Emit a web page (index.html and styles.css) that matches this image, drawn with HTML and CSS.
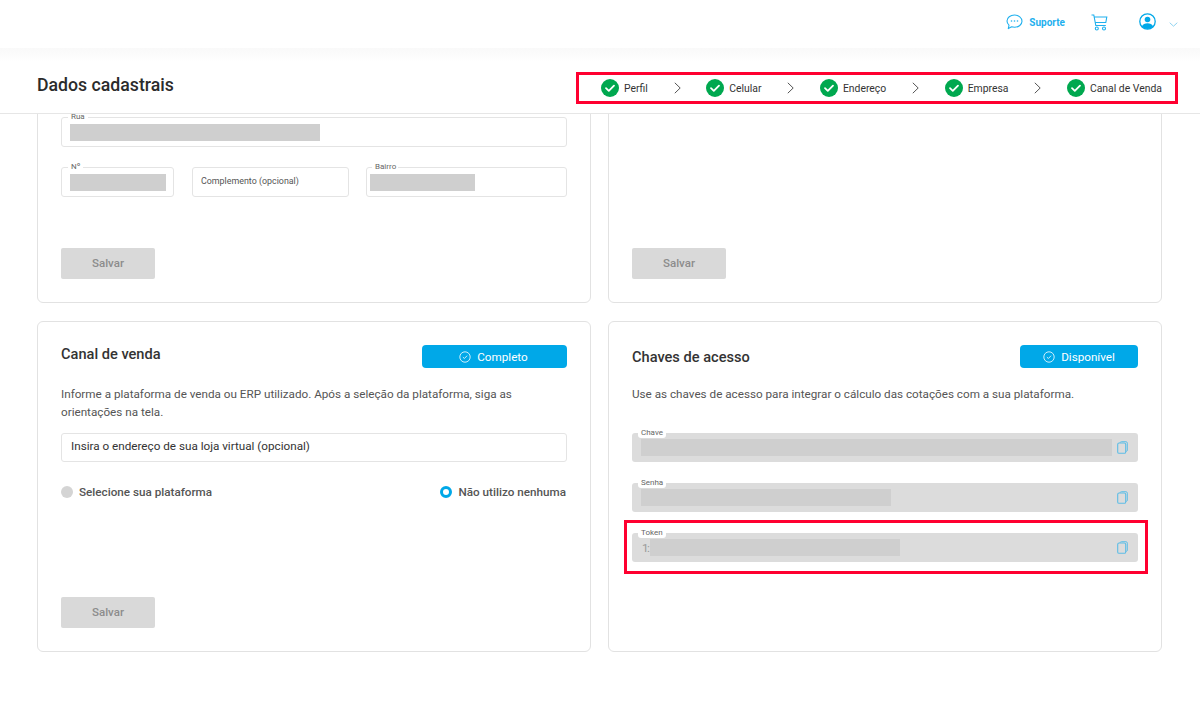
FILE: index.html
```html
<!DOCTYPE html>
<html lang="pt-BR">
<head>
<meta charset="utf-8">
<title>Dados cadastrais</title>
<link rel="stylesheet" href="styles.css">
</head>
<body>
<svg class="defs" width="0" height="0" aria-hidden="true">
  <symbol id="step-check" viewBox="0 0 18 18">
    <circle cx="9" cy="9" r="9" fill="#00a84f"/>
    <path d="M5 9.2l2.8 2.7L13 6.6" fill="none" stroke="#fff" stroke-width="1.8" stroke-linecap="round" stroke-linejoin="round"/>
  </symbol>
  <symbol id="step-arrow" viewBox="0 0 7 12">
    <path d="M.8.8L6.2 6 .8 11.2" fill="none" stroke="#555" stroke-width="1"/>
  </symbol>
  <symbol id="badge-check" viewBox="0 0 12 12">
    <circle cx="6" cy="6" r="5.2" fill="none" stroke="#fff" stroke-width=".8"/>
    <path d="M3.9 6.1l1.5 1.4 2.7-2.8" fill="none" stroke="#fff" stroke-width=".8"/>
  </symbol>
  <symbol id="copy" viewBox="0 0 11 13">
    <path d="M3 1.7Q3.3.7 4.4.7h4.5q1.4 0 1.4 1.4v7q0 1.1-1 1.4" fill="none" stroke="#5dbde6" stroke-width="1"/>
    <rect x=".7" y="2" width="8" height="10.3" rx="1.4" fill="none" stroke="#5dbde6" stroke-width="1.1"/>
  </symbol>
</svg>

<header class="topbar">
  <a class="support">
    <svg class="support-icon" viewBox="0 0 17 16" aria-hidden="true">
      <path d="M8.5 1C4.4 1 1 3.600 1 7c0 1.600.8 3.100 2 4.100L2.300 14.600l3.400-1.800c.9.3 1.800.4 2.800.4 4.100 0 7.500-2.700 7.500-5.900S12.600 1 8.500 1z" fill="none" stroke="#1fb0ee" stroke-width="1.100" stroke-linejoin="round"/>
      <circle cx="5.500" cy="7" r=".8" fill="#1fb0ee"/><circle cx="8.500" cy="7" r=".8" fill="#1fb0ee"/><circle cx="11.500" cy="7" r=".8" fill="#1fb0ee"/>
    </svg>
    <span>Suporte</span>
  </a>
  <svg class="cart-icon" viewBox="0 0 17 17" aria-hidden="true">
    <path d="M.5 1h2.300l2 10.500h10M3.300 3h12.500l-1 5.500H4.300" fill="none" stroke="#1fb0ee" stroke-width="1.100"/>
    <circle cx="5.800" cy="14.500" r="1.500" fill="none" stroke="#1fb0ee" stroke-width="1.100"/>
    <circle cx="13" cy="14.500" r="1.500" fill="none" stroke="#1fb0ee" stroke-width="1.100"/>
  </svg>
  <svg class="user-icon" viewBox="0 0 17 17" aria-hidden="true">
    <circle cx="8.500" cy="8.500" r="7.700" fill="#fff" stroke="#00a8e8" stroke-width="1.300"/>
    <circle cx="8.500" cy="6.500" r="2.800" fill="#00a8e8"/>
    <path d="M2.800 13.500c1-2.300 3.200-3.300 5.700-3.300s4.700 1 5.700 3.300a7.700 7.700 0 0 1-11.400 0z" fill="#00a8e8"/>
  </svg>
  <svg class="caret-icon" viewBox="0 0 9 5" aria-hidden="true">
    <path d="M.7.7l3.800 3.500L8.300.7" fill="none" stroke="#8fd3f0" stroke-width="1"/>
  </svg>
</header>
<div class="shade"></div>

<section class="titlebar">
  <h1>Dados cadastrais</h1>
  <ol class="steps">
    <li class="step"><svg class="check"><use href="#step-check"/></svg>Perfil</li>
    <li class="arrow"><svg><use href="#step-arrow"/></svg></li>
    <li class="step"><svg class="check"><use href="#step-check"/></svg>Celular</li>
    <li class="arrow"><svg><use href="#step-arrow"/></svg></li>
    <li class="step"><svg class="check"><use href="#step-check"/></svg>Endereço</li>
    <li class="arrow"><svg><use href="#step-arrow"/></svg></li>
    <li class="step"><svg class="check"><use href="#step-check"/></svg>Empresa</li>
    <li class="arrow"><svg><use href="#step-arrow"/></svg></li>
    <li class="step"><svg class="check"><use href="#step-check"/></svg>Canal de Venda</li>
  </ol>
</section>

<main class="viewport">
  <div class="cards">
    <article class="card card-top">
      <div class="field field-full">
        <span class="legend">Rua</span>
        <span class="mask mask-rua"></span>
      </div>
      <div class="field-row">
        <div class="field field-num">
          <span class="legend">Nº</span>
          <span class="mask mask-num"></span>
        </div>
        <div class="field field-comp"><span class="placeholder">Complemento (opcional)</span></div>
        <div class="field field-bairro">
          <span class="legend">Bairro</span>
          <span class="mask mask-bairro"></span>
        </div>
      </div>
      <button class="save">Salvar</button>
    </article>

    <article class="card card-top">
      <button class="save">Salvar</button>
    </article>

    <article class="card card-bottom">
      <div class="card-head head-canal">
        <h2>Canal de venda</h2>
        <span class="badge badge-wide"><svg class="badge-check"><use href="#badge-check"/></svg>Completo</span>
      </div>
      <p class="desc">Informe a plataforma de venda ou ERP utilizado. Após a seleção da plataforma, siga as orientações na tela.</p>
      <div class="field field-url"><span class="url-text">Insira o endereço de sua loja virtual (opcional)</span></div>
      <div class="radios">
        <label class="radio"><span class="dot"></span>Selecione sua plataforma</label>
        <label class="radio"><span class="dot dot-on"></span>Não utilizo nenhuma</label>
      </div>
      <button class="save">Salvar</button>
    </article>

    <article class="card card-bottom">
      <div class="card-head head-keys">
        <h2>Chaves de acesso</h2>
        <span class="badge badge-narrow"><svg class="badge-check"><use href="#badge-check"/></svg>Disponível</span>
      </div>
      <p class="desc desc-keys">Use as chaves de acesso para integrar o cálculo das cotações com a sua plataforma.</p>
      <div class="keys">
        <div class="key">
          <span class="key-legend">Chave</span>
          <span class="mask mask-chave"></span>
          <svg class="copy"><use href="#copy"/></svg>
        </div>
        <div class="key">
          <span class="key-legend">Senha</span>
          <span class="mask mask-senha"></span>
          <svg class="copy"><use href="#copy"/></svg>
        </div>
        <div class="key key-marked">
          <span class="key-legend">Token</span>
          <span class="key-value">1:</span>
          <span class="mask mask-token"></span>
          <svg class="copy"><use href="#copy"/></svg>
        </div>
      </div>
    </article>
  </div>
</main>
</body>
</html>
```

FILE: styles.css
```css
*, *::after { box-sizing: border-box; }
html, body { height: 100%; }
body {
  margin: 0;
  background: #fff;
  color: #333;
  font-family: Roboto, "Liberation Sans", sans-serif;
  overflow: hidden;
}
.defs { position: absolute; }

/* top navigation */
.topbar {
  height: 48px;
  display: flex;
  align-items: center;
  justify-content: flex-end;
  padding: 0 22px 4px 0;
}
.support {
  display: flex;
  align-items: center;
  gap: 6px;
  color: #1fb0ee;
  font-size: 10px;
  font-weight: 700;
}
.support-icon { width: 17px; height: 16px; }
.cart-icon { width: 17px; height: 17px; margin-left: 26px; }
.user-icon { width: 17px; height: 17px; margin-left: 31px; margin-top: -1px; }
.caret-icon { width: 9px; height: 5px; margin-left: 13px; margin-top: 4px; }
.shade { height: 14px; background: linear-gradient(#f9f9f9, #fff); }

/* title and stepper */
.titlebar {
  height: 52px;
  display: flex;
  align-items: center;
  justify-content: space-between;
  padding: 0 22px 5px 37px;
  border-bottom: 1px solid #e6e6e6;
}
h1 {
  margin: 0 0 1px;
  font-size: 17.700px;
  font-weight: 500;
  color: #2b2b2b;
}
.steps {
  list-style: none;
  margin: 6px 0 0;
  width: 602px;
  height: 32px;
  padding: 0 13px 0 22px;
  display: flex;
  align-items: center;
  justify-content: space-between;
  border: 3px solid #ff0030;
  font-size: 10.400px;
  color: #333;
}
.step { display: flex; align-items: center; gap: 5px; }
.check { width: 18px; height: 18px; }
.arrow { display: flex; }
.arrow svg { width: 7px; height: 12px; }

/* scrolled content */
.viewport { height: 592px; overflow: hidden; }
.cards {
  margin-top: -22px;
  padding: 0 38px 0 37px;
  display: grid;
  grid-template-columns: 554px 554px;
  grid-template-rows: 211px 331px;
  column-gap: 17px;
  row-gap: 18px;
}
.card {
  display: flex;
  flex-direction: column;
  border: 1px solid #e2e2e2;
  border-radius: 6px;
  padding: 0 23px 23px;
}
.card-top { padding-top: 24px; }
.save {
  width: 94px;
  height: 31px;
  margin-top: auto;
  padding: 0 0 2px;
  border: 0;
  border-radius: 2px;
  background: #d9d9d9;
  color: #8c8c8c;
  font: 500 11.500px Roboto, sans-serif;
}

/* outlined fields */
.field {
  position: relative;
  display: flex;
  align-items: center;
  height: 30px;
  border: 1px solid #e4e4e4;
  border-radius: 3px;
  padding: 0 8px;
  font-size: 8.900px;
  color: #555;
}
.field-row { display: flex; margin-top: 20px; }
.field-num { width: 113px; padding-right: 6px; }
.field-comp { width: 157px; margin-left: 18px; padding-bottom: 2px; }
.field-bairro { width: 201px; margin-left: 17px; padding-left: 3px; }
.legend {
  position: absolute;
  top: -6px;
  left: 6px;
  padding: 0 3px;
  background: #fff;
  font-size: 8px;
  line-height: 10px;
  color: #666;
}
.field-bairro .legend { left: 5px; padding: 0 2px 0 3px; }
.mask { display: block; height: 17px; background: #cfcfcf; flex: none; }
.mask-rua { width: 250px; }
.mask-num { width: 96px; }
.mask-bairro { width: 105px; }

/* card text */
.card-head { display: flex; align-items: center; justify-content: space-between; }
.head-canal { margin-top: 23px; }
.head-keys { margin-top: 23px; }
h2 { margin: 0; font-size: 14.600px; font-weight: 500; color: #333; }
.head-canal h2 { margin-top: -5px; }
.head-keys h2 { margin-top: 1px; }
.badge {
  height: 23px;
  border-radius: 4px;
  background: #00a8e8;
  color: #fff;
  font-size: 11.700px;
  display: flex;
  align-items: center;
  justify-content: center;
  gap: 6px;
}
.badge-wide { width: 145px; padding-right: 2px; }
.badge-narrow { width: 118px; }
.badge-check { width: 12px; height: 12px; }
.desc {
  margin: 17px 0 0;
  font-size: 11.700px;
  line-height: 18px;
  color: #555;
}
.field-url { margin-top: 12px; height: 29px; font-size: 11.700px; color: #333; padding: 0 9px 3px; }
.radios {
  display: flex;
  justify-content: space-between;
  margin-top: 23px;
  padding-right: 1px;
  font-size: 11.700px;
  font-weight: 500;
  color: #555;
}
.radio { display: flex; align-items: center; gap: 6px; }
.dot { width: 12px; height: 12px; border-radius: 50%; background: #d4d4d4; }
.dot-on { background: #fff; border: 3.500px solid #00a8e8; }

/* access keys */
.desc-keys { margin-top: 17px; }
.keys { display: flex; flex-direction: column; gap: 21px; margin-top: 30px; }
.key {
  position: relative;
  height: 29px;
  display: flex;
  align-items: center;
  padding: 0 9px;
  border-radius: 3px;
  background: #dcdcdc;
}
.key-legend {
  position: absolute;
  top: -5px;
  left: 6px;
  padding: 0 3px;
  background: #fff;
  border-radius: 3px;
  font-size: 8px;
  line-height: 10px;
  color: #666;
}
.key-value { width: 8px; margin-left: 1px; font-size: 11.700px; letter-spacing: -1.500px; white-space: nowrap; color: #999; }
.copy { width: 11px; height: 13px; margin-left: auto; margin-right: 1px; flex: none; }
.mask-chave { width: 471px; }
.mask-senha { width: 250px; }
.mask-token { width: 250px; }
.key-marked::after {
  content: "";
  position: absolute;
  top: -13px;
  left: -8px;
  width: 524px;
  height: 54px;
  border: 3px solid #ff0030;
}
```
